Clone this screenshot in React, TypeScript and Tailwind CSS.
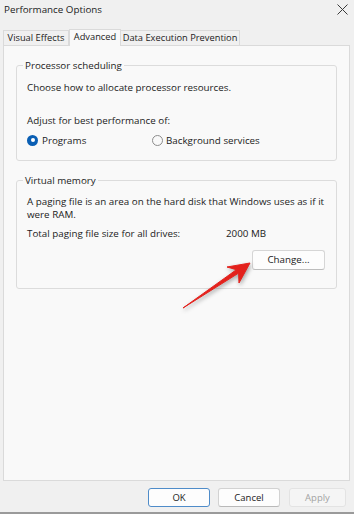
import React from 'react';

const font = { fontFamily: '"Open Sans", "Noto Sans", sans-serif' };

function Radio({ checked }: { checked?: boolean }) {
  if (checked) {
    return (
      <span className="w-[11px] h-[11px] rounded-full bg-[#0a5fb4] flex items-center justify-center shrink-0">
        <span className="w-[4px] h-[4px] rounded-full bg-white" />
      </span>
    );
  }
  return <span className="w-[11px] h-[11px] rounded-full border border-[#8c8c8c] bg-[#f9f9f9] shrink-0" />;
}

function Button({ label, primary, disabled }: { label: string; primary?: boolean; disabled?: boolean }) {
  return (
    <button
      className={
        primary
          ? 'w-[62px] h-[19px] rounded-[3px] border border-[#4f8cc9] bg-[#fdfdfd] text-[9.5px] text-[#1b1b1b] leading-none'
          : disabled
            ? 'w-[57px] h-[19px] rounded-[3px] border border-[#e3e3e3] bg-[#f5f5f5] text-[9.5px] text-[#a3a3a3] leading-none'
            : 'w-[62px] h-[19px] rounded-[3px] border border-[#d2d2d2] border-b-[#b9b9b9] bg-[#fdfdfd] text-[9.5px] text-[#1b1b1b] leading-none'
      }
    >
      {label}
    </button>
  );
}

export default function App() {
  return (
    <div className="relative w-[354px] h-[514px] bg-[#f0f0f0] flex flex-col text-[#1b1b1b] overflow-hidden" style={font}>
      <div className="h-[28px] flex items-start justify-between pl-[4px] pr-[6px] pt-[3px]">
        <span className="text-[9.8px]">Performance Options</span>
        <svg width="11" height="11" viewBox="0 0 11 11" className="mt-[1px]">
          <path d="M0.5 0.5 L10.5 10.5 M10.5 0.5 L0.5 10.5" stroke="#3a3a3a" strokeWidth="1" />
        </svg>
      </div>

      <div className="flex items-end h-[17px] pl-[3px] text-[9.3px] leading-none">
        <div className="h-[15px] w-[66px] flex items-center justify-center border border-b-0 border-[#dadada] bg-[#f0f0f0]">Visual Effects</div>
        <div className="h-[17px] w-[52px] flex items-center justify-center border border-b-0 border-[#dadada] bg-[#f9f9f9] -mb-[1px] relative z-10 pb-[2px]">Advanced</div>
        <div className="h-[15px] w-[119px] flex items-center justify-center border border-l-0 border-b-0 border-[#dadada] bg-[#f0f0f0]">Data Execution Prevention</div>
      </div>

      <div className="mx-[3px] mr-[4px] h-[436px] bg-[#f9f9f9] border border-[#dadada] px-[12px] pt-[15px] text-[9.8px]">
        <fieldset className="border border-[#dcdcdc] rounded-[3px] h-[100px] px-[10px] pt-[6px]">
          <legend className="px-[2px] -ml-[4px] leading-none">Processor scheduling</legend>
          <div className="leading-[13px] mt-[4px]">Choose how to allocate processor resources.</div>
          <div className="leading-[13px] mt-[20px]">Adjust for best performance of:</div>
          <div className="flex items-center mt-[7px] leading-[13px]">
            <Radio checked />
            <span className="ml-[4px] w-[110px]">Programs</span>
            <Radio />
            <span className="ml-[3px]">Background services</span>
          </div>
        </fieldset>

        <fieldset className="border border-[#dcdcdc] rounded-[3px] h-[113px] px-[10px] pt-[6px] mt-[15px]">
          <legend className="px-[2px] -ml-[4px] leading-none">Virtual memory</legend>
          <div className="leading-[13px] mt-[3px] whitespace-nowrap">
            A paging file is an area on the hard disk that Windows uses as if it
            <br />
            were RAM.
          </div>
          <div className="flex leading-[13px] mt-[6px]">
            <span className="w-[199px]">Total paging file size for all drives:</span>
            <span>2000 MB</span>
          </div>
          <div className="flex justify-end mt-[10px] pr-[1px]">
            <button className="w-[73px] h-[20px] rounded-[3px] border border-[#d6d6d6] border-b-[#bdbdbd] bg-[#fdfdfd] text-[9.8px] leading-none">
              Change...
            </button>
          </div>
        </fieldset>
      </div>

      <div className="flex justify-end pr-[8px] pt-[7px]">
        <Button label="OK" primary />
        <div className="w-[8px]" />
        <Button label="Cancel" />
        <div className="w-[9px]" />
        <Button label="Apply" disabled />
      </div>

      <div className="absolute left-0 right-0 bottom-0 h-[2px] bg-[#9a9a9a]" />

      <svg className="absolute left-0 top-0 pointer-events-none" width="354" height="514" style={{ filter: 'drop-shadow(1px 2px 2px rgba(0,0,0,0.35))' }}>
        <polygon points="183,308 236.4,269.7 227,267 250,263 239,283 238.6,273.1" fill="#e3211c" strokeLinejoin="round" stroke="#e3211c" strokeWidth="1" />
      </svg>
    </div>
  );
}
